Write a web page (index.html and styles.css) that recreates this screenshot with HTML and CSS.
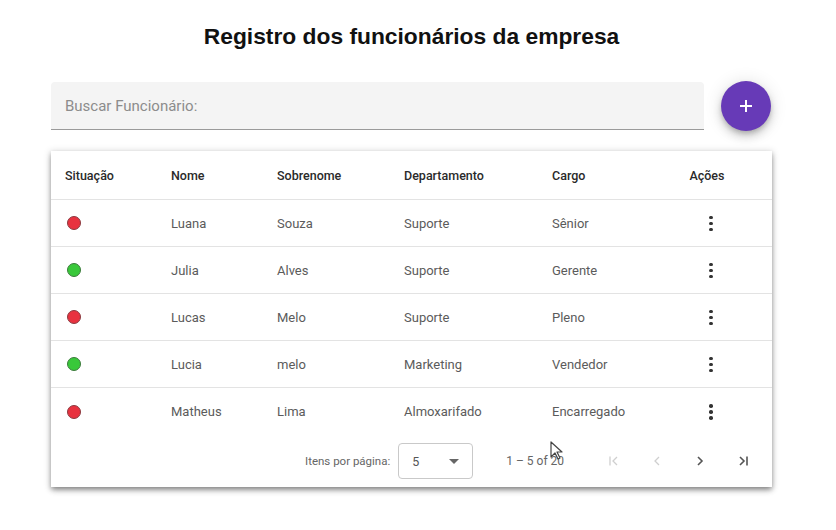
FILE: index.html
```html
<!DOCTYPE html>
<html lang="pt">
<head>
<meta charset="utf-8">
<link rel="stylesheet" href="styles.css">
</head>
<body>
<div class="page">
  <h1 class="title">Registro dos funcionários da empresa</h1>
  <div class="toolbar">
    <div class="search"><span class="placeholder">Buscar Funcionário:</span></div>
    <button class="fab" aria-label="Adicionar">
      <svg width="16" height="16" viewBox="0 0 16 16"><path d="M8 2v12M2 8h12" stroke="#fff" stroke-width="2"/></svg>
    </button>
  </div>
  <div class="card">
    <div class="row head">
      <div class="c c1">Situação</div>
      <div class="c c2">Nome</div>
      <div class="c c3">Sobrenome</div>
      <div class="c c4">Departamento</div>
      <div class="c c5">Cargo</div>
      <div class="c c6">Ações</div>
    </div>
    <div class="row">
      <div class="c c1"><span class="dot red"></span></div>
      <div class="c c2">Luana</div><div class="c c3">Souza</div><div class="c c4">Suporte</div><div class="c c5">Sênior</div>
      <div class="c c6"><span class="more"><i></i><i></i><i></i></span></div>
    </div>
    <div class="row">
      <div class="c c1"><span class="dot green"></span></div>
      <div class="c c2">Julia</div><div class="c c3">Alves</div><div class="c c4">Suporte</div><div class="c c5">Gerente</div>
      <div class="c c6"><span class="more"><i></i><i></i><i></i></span></div>
    </div>
    <div class="row">
      <div class="c c1"><span class="dot red"></span></div>
      <div class="c c2">Lucas</div><div class="c c3">Melo</div><div class="c c4">Suporte</div><div class="c c5">Pleno</div>
      <div class="c c6"><span class="more"><i></i><i></i><i></i></span></div>
    </div>
    <div class="row">
      <div class="c c1"><span class="dot green"></span></div>
      <div class="c c2">Lucia</div><div class="c c3">melo</div><div class="c c4">Marketing</div><div class="c c5">Vendedor</div>
      <div class="c c6"><span class="more"><i></i><i></i><i></i></span></div>
    </div>
    <div class="row last">
      <div class="c c1"><span class="dot red"></span></div>
      <div class="c c2">Matheus</div><div class="c c3">Lima</div><div class="c c4">Almoxarifado</div><div class="c c5">Encarregado</div>
      <div class="c c6"><span class="more"><i></i><i></i><i></i></span></div>
    </div>
    <div class="paginator">
      <span class="label">Itens por página:</span>
      <div class="select"><span>5</span><span class="caret"></span></div>
      <span class="range">1 – 5 of 20</span>
      <div class="navs">
        <span class="nav off"><svg width="12" height="12" viewBox="0 0 12 12"><path d="M2 1.5v9M9 2 5 6l4 4" fill="none" stroke="currentColor" stroke-width="1.3"/></svg></span>
        <span class="nav off"><svg width="12" height="12" viewBox="0 0 12 12"><path d="M8 2 4 6l4 4" fill="none" stroke="currentColor" stroke-width="1.3"/></svg></span>
        <span class="nav"><svg width="12" height="12" viewBox="0 0 12 12"><path d="M4 2l4 4-4 4" fill="none" stroke="currentColor" stroke-width="1.6"/></svg></span>
        <span class="nav"><svg width="12" height="12" viewBox="0 0 12 12"><path d="M10 1.5v9M3 2l4 4-4 4" fill="none" stroke="currentColor" stroke-width="1.6"/></svg></span>
      </div>
      <svg class="cursor" width="14" height="20" viewBox="0 0 14 20"><path d="M1 1v15l4-4 3 6 2-1-3-6h5z" fill="#fff" stroke="#444" stroke-width="1.2" stroke-linejoin="round"/></svg>
    </div>
  </div>
</div>
</body>
</html>
```
FILE: styles.css
```css
html, body { margin: 0; padding: 0; background: #fff; }
body { font-family: Roboto, "Noto Sans", sans-serif; }
.page { width: 721px; margin-left: 51px; padding-top: 22px; padding-bottom: 40px; }
.title {
  margin: 0; text-align: center;
  font-family: "Liberation Sans", Arial, sans-serif;
  font-size: 22.8px; font-weight: bold; color: #111; line-height: 28px;
}
.toolbar { display: flex; align-items: center; gap: 17px; margin-top: 31px; }
.search {
  flex: 0 0 653px; height: 48px; background: #f4f4f4;
  border-bottom: 1.5px solid #9a9a9a; border-radius: 4px 4px 0 0;
  display: flex; align-items: center; padding-left: 14px; box-sizing: border-box;
}
.placeholder { font-size: 15px; color: #8c8c8c; }
.fab {
  width: 50px; height: 50px; border-radius: 50%; border: 0; padding: 0;
  background: #673ab7; display: flex; align-items: center; justify-content: center;
  box-shadow: 0 3px 5px -1px rgba(0,0,0,.2), 0 6px 10px 0 rgba(0,0,0,.14), 0 1px 18px 0 rgba(0,0,0,.12);
}
.card {
  margin-top: 20px; background: #fff; position: relative;
  box-shadow: 0 4px 6px -1px rgba(0,0,0,.3), 0 2px 4px 0 rgba(0,0,0,.16), 0 1px 7px 1px rgba(0,0,0,.14);
}
.row { display: flex; align-items: center; height: 46px; border-bottom: 1px solid #e3e3e3; padding-left: 14px; font-size: 13px; color: #5b5b5b; }
.row.head { height: 48px; color: #2a2a2a; font-weight: 500; font-size: 12.5px; }
.row.last { border-bottom: 0; height: 47px; }
.c1 { width: 106px; }
.c2 { width: 106px; }
.c3 { width: 127px; }
.c4 { width: 148px; }
.c5 { width: 124px; }
.c6 { width: 62px; text-align: center; }
.dot { display: block; width: 14px; height: 14px; border-radius: 50%; margin-left: 2px; box-sizing: border-box; }
.dot.red { background: #e8323f; border: 1px solid #8a3a40; }
.dot.green { background: #39c83a; border: 1px solid #3c7a3c; }
.more { display: inline-flex; flex-direction: column; gap: 2.5px; margin-left: 8px; vertical-align: middle; }
.more i { display: block; width: 3.5px; height: 3.5px; border-radius: 50%; background: #333; }
.paginator { display: flex; align-items: center; height: 52px; padding-left: 254px; font-size: 12px; color: #666; position: relative; }
.label { font-size: 11.5px; }
.select {
  margin-left: 8px; width: 75px; height: 36px; box-sizing: border-box;
  border: 1px solid #c9c9c9; border-radius: 4px; display: flex; align-items: center;
  justify-content: space-between; padding: 0 13px 0 13px; font-size: 12.5px; color: #555;
}
.caret { width: 0; height: 0; border-left: 5px solid transparent; border-right: 5px solid transparent; border-top: 5px solid #666; }
.range { margin-left: 33px; }
.navs { display: flex; margin-left: 36px; gap: 15px; }
.nav { width: 28px; height: 28px; display: flex; align-items: center; justify-content: center; color: #555; }
.nav.off { color: #cfcfcf; }
.cursor { position: absolute; left: 499px; top: 6px; }
```
